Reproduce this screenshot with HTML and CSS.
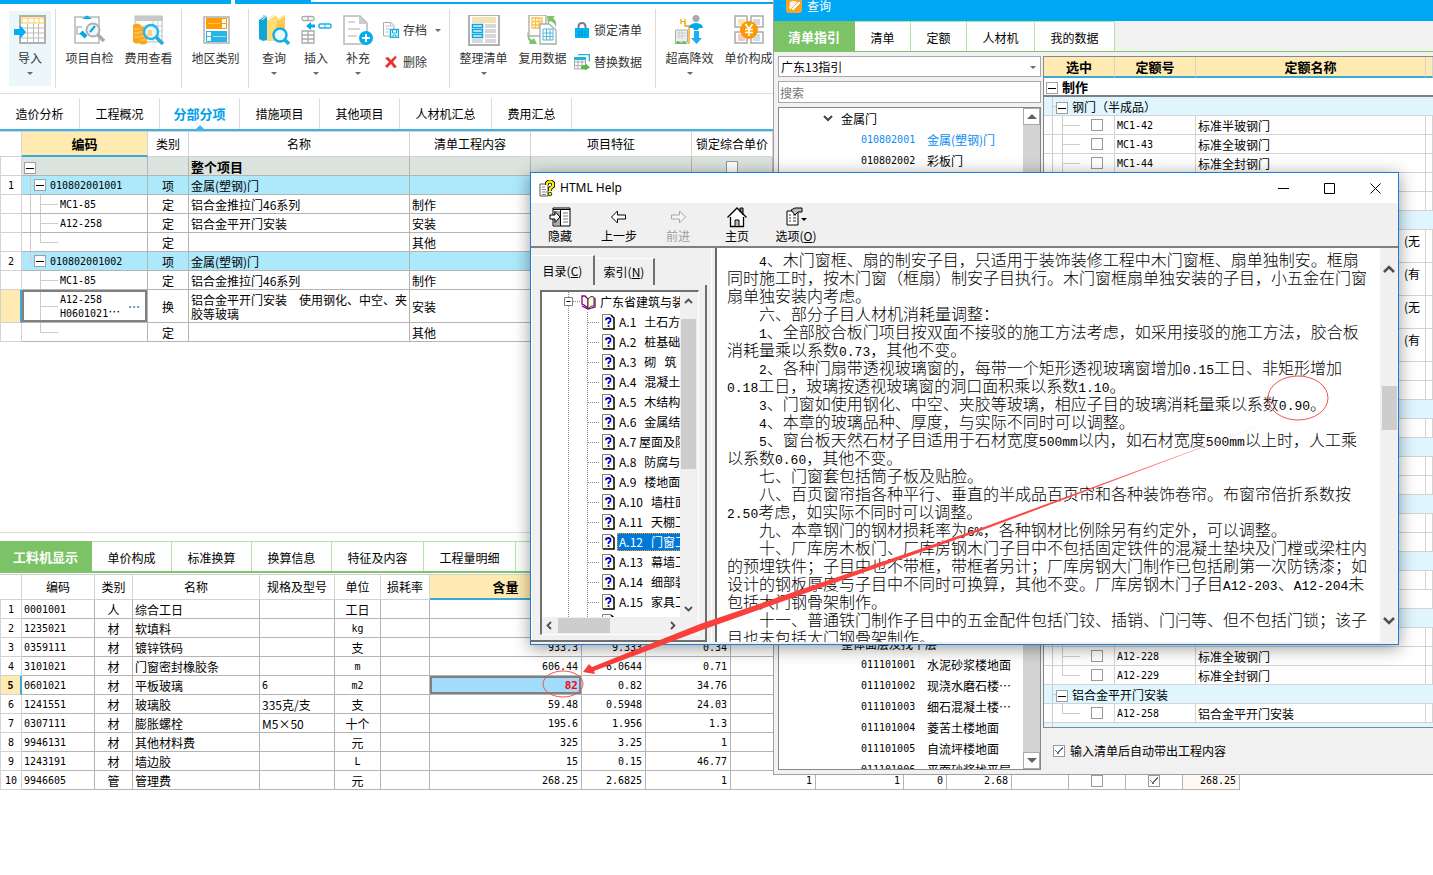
FILE: index.html
```html
<!DOCTYPE html>
<html lang="zh-CN">
<head>
<meta charset="utf-8">
<title>分部分项</title>
<link rel="stylesheet" href="styles.css">
</head>
<body>
<svg class="defs" aria-hidden="true">
  <symbol id="i-topic" viewBox="0 0 13 16"><path d="M1 1H9L12 4V15H1Z" fill="#fffff0"/><path d="M3 3h1M7 3h1M3 13h1M7 13h1M2 6h1M2 10h1" stroke="#e8e000"/><path d="M.5 15V.5H9" fill="none" stroke="#808080"/><path d="M9 1l3 3V15H1" fill="none" stroke="#000" stroke-width="1.5"/><path d="M4.2 6.2V4.8Q6.5 3.2 8.4 4.8V7L6.5 8.6V10M6.5 11.3v1.7" fill="none" stroke="#0000e0" stroke-width="1.8"/></symbol>
  <symbol id="i-caret" viewBox="0 0 6 3"><path d="M0 0H6L3 3Z" fill="#666b78"/></symbol>
</svg>

<main class="app">
  <div class="topline"><span></span><span></span><span></span></div>
  <header class="ribbon">
    <div class="group first">
      <button class="big hot"><svg width="32" height="32" viewBox="0 0 32 32"><rect x="6" y="1" width="25" height="27" fill="#fff" stroke="#b0b0b0" stroke-width="2"/><path d="M7 8h23M8 3h22M8 3v5M14 3v5M20 3v5M25 3v5M30 3v5" stroke="#ffc84a"/><path d="M7 13h23M7 18h23M7 23h23M13.500 9v19M19.500 9v19M24.500 9v19" stroke="#bbb"/><path d="M0 14h6v-4l6 7-6 7v-4H0Z" fill="#00b0f0"/></svg><span>导入</span><svg class="caret"><use href="#i-caret"/></svg></button>
    </div>
    <div class="group">
      <button class="big"><svg width="32" height="32" viewBox="0 0 32 32"><rect x="1" y="2" width="24" height="26" fill="#fff" stroke="#b8b8b8" stroke-width="1.500"/><path d="M8 4l3-2q2-3 4 0l3 2Z" fill="#00aeef"/><path d="M8 12H3v7h5" fill="none" stroke="#bbb" stroke-width="1.500"/><circle cx="19" cy="15" r="6.500" fill="#eef6fa" stroke="#b0b0b0" stroke-width="2"/><path d="M24 20l6 6" stroke="#aaa" stroke-width="3.500"/><path d="M7 17l5 5" stroke="#00a8e8" stroke-width="4"/><path d="M16 17l5-6" stroke="#00a8e8" stroke-width="2"/></svg><span>项目自检</span></button>
      <button class="big"><svg width="32" height="32" viewBox="0 0 32 32"><rect x="2" y="1" width="27" height="26" fill="#fff" stroke="#bbb"/><path d="M2 1h28v5H2Z" fill="#c8c8c8"/><path d="M3 11h27M3 16h27M3 21h27M20 6v21M25 6v21" stroke="#ccc"/><path d="M0 10q4-3 8 0v17q-4 3-8 0ZM6 13q4-3 8 0v15q-4 3-8 0Z" fill="#f9a61a"/><path d="M1 14h6M1 18h6M1 22h6M7 17h6M7 21h6M7 25h6" stroke="#fdd27a"/><circle cx="18" cy="17" r="7" fill="#e8f6fc" stroke="#29b6e8" stroke-width="2.500"/><path d="M15 15h4v6h-5Z" fill="#ffd27a"/><path d="M23 22l7 7" stroke="#29a8dc" stroke-width="3.500"/></svg><span>费用查看</span></button>
    </div>
    <div class="group">
      <button class="big"><svg width="32" height="32" viewBox="0 0 32 32"><rect x="4" y="2" width="25" height="26" fill="#fff" stroke="#b0b0b0" stroke-width="1.500"/><path d="M6 3h21v11H6Z" fill="#ff9c00"/><path d="M22 4h4v4h-4zM22 9h4v4h-4z" fill="#fff"/><path d="M8 8.500h12" stroke="#ffc266"/><path d="M6 16h21v11H6Z" fill="#28b4e4"/><path d="M7 17h4v4H7zM7 22h4v4H7z" fill="#fff"/><path d="M13 21.500h13" stroke="#9be0f5"/></svg><span>地区类别</span></button>
    </div>
    <div class="group">
      <button class="big narrow"><svg width="32" height="32" viewBox="0 0 32 32"><path d="M1 5l5-5 3 1v24l-4 1-4-2Z" fill="#12a5da"/><path d="M2 4l6-4M4 5l6-5" stroke="#fff"/><path d="M9 5l6-5 4 1v25H9Z" fill="#ffdc78"/><path d="M19 4l7-4 1 1v26h-9Z" fill="#ffc94a"/><path d="M10 5l7-5M20 5l6-4" stroke="#fff"/><circle cx="22" cy="20" r="6.500" fill="#eaf8fe" stroke="#16aee8" stroke-width="2.500"/><path d="M26 24l5 5" stroke="#16aee8" stroke-width="3.500"/></svg><span>查询</span><svg class="caret"><use href="#i-caret"/></svg></button>
      <button class="big narrow"><svg width="32" height="32" viewBox="0 0 32 32"><g fill="#fff" stroke="#aaa" stroke-width="1.300"><rect x="2" y="1.500" width="12" height="4" rx="1.500"/><path d="M8 1.500v4M2 16h12v12H2ZM2 20h12M2 24h12M8 16v12"/></g><path d="M6 11l5-4v2.500h4v3h-4V15Z" fill="#00a8e8"/><rect x="19" y="9" width="12" height="4" rx="1.500" fill="#fff" stroke="#18b0ea" stroke-width="1.500"/><path d="M25 9v4" stroke="#18b0ea"/></svg><span>插入</span><svg class="caret"><use href="#i-caret"/></svg></button>
      <button class="big narrow"><svg width="32" height="32" viewBox="0 0 32 32"><path d="M2 1h16l7 7v21H2Z" fill="#fff" stroke="#b8b8b8" stroke-width="1.500"/><path d="M17 1v8h8Z" fill="#ccc"/><path d="M6 7h7M6 14h12M6 21h9" stroke="#ccc" stroke-width="1.500"/><circle cx="24" cy="23" r="7" fill="#00aeef"/><path d="M20 23h8M24 19v8" stroke="#fff" stroke-width="2"/></svg><span>补充</span><svg class="caret"><use href="#i-caret"/></svg></button>
      <div class="stack arch">
        <button class="small"><svg width="16" height="16" viewBox="0 0 16 16"><path d="M.5.500H8l3 3V14H.500Z" fill="#fff" stroke="#aaa"/><path d="M7.500.500V4H11M2.500 4h4M2.500 7h4M2.500 10h3" fill="none" stroke="#bbb"/><rect x="7.500" y="7.500" width="8" height="8" fill="#fff" stroke="#10b0e0" stroke-width="1.500"/><path d="M9.500 8v3h4V8M10 15v-2h3v2" fill="none" stroke="#10b0e0"/></svg><span>存档</span><svg class="caret"><use href="#i-caret"/></svg></button>
        <button class="small"><svg width="16" height="16" viewBox="0 0 16 16"><path d="M2 4l3-1 3 3 4-4 2 1-4 5 4 5-3 1-3-4-4 4-2-2 4-4Z" fill="#e8342c"/></svg><span>删除</span></button>
      </div>
    </div>
    <div class="group">
      <button class="big"><svg width="32" height="32" viewBox="0 0 32 32"><rect x="1" y="0" width="30" height="30" fill="#fff" stroke="#b0b0b0" stroke-width="2"/><path d="M4 2h24v6H4Z" fill="#f5e3b3"/><path d="M17 9h11v4H17zM17 14h11v4H17zM17 19h11v4H17zM17 24h11v4H17zM4 24h11v4H4z" fill="#d8d8dc"/><path d="M4.500 9.500h10v3h-10zM4.500 14.500h10v3h-10zM4.500 19.500h10v3h-10z" fill="#dff4fc" stroke="#10a8dc" stroke-width="1.500"/></svg><span>整理清单</span><svg class="caret"><use href="#i-caret"/></svg></button>
      <button class="big"><svg width="32" height="32" viewBox="0 0 32 32"><path d="M2 0h17v21H2Z" fill="#fff" stroke="#aaa" stroke-width="1.300"/><path d="M5 3h10v10H5ZM5 6.500h10M5 10h10M8.500 3v10M12 3v10" fill="none" stroke="#ffc040" stroke-width="1.300"/><path d="M13 9h9l7 6v14H13Z" fill="#fff" stroke="#aaa" stroke-width="1.300"/><path d="M16 14h10v11H16ZM16 18h10M16 21.500h10M19.500 14v11M23 14v11" fill="none" stroke="#4db8d8"/><path d="M20 1h8l-2 2q4 3 3 9-2-5-6-6l-2 3ZM1 16q0 7 4 9l2-2 3 6H2l1-2q-4-4-2-11Z" fill="#7cc36b"/></svg><span>复用数据</span></button>
      <div class="stack lock">
        <button class="small"><svg width="16" height="16" viewBox="0 0 16 16"><path d="M4.500 7V4Q5 1 8 1t3.500 3v3" fill="none" stroke="#777c88" stroke-width="2"/><path d="M1 6h14v10H1Z" fill="#00b4f4"/><path d="M4 10h2M7 10h2M10 10h2M4 13h2M7 13h2M10 13h2" stroke="#067ab0"/></svg><span>锁定清单</span></button>
        <button class="small"><svg width="16" height="16" viewBox="0 0 16 16"><path d="M.5 4h11v11H.500ZM.500 8h11M.500 11.500h11M4 4v11M8 4v11" fill="#fff" stroke="#aaa"/><path d="M0 3h12v3H0Z" fill="#20b4d8"/><path d="M4 .5h11.500v7" fill="none" stroke="#20b4d8" stroke-width="1.500"/><path d="M7 12h4V9l5 4.500-5 3V15H7Z" fill="#4dbb45"/></svg><span>替换数据</span></button>
      </div>
    </div>
    <div class="group last">
      <button class="big"><svg width="32" height="32" viewBox="0 0 32 32"><path d="M7 4v5M11 4v5M7 6.500h4" stroke="#f9a000" stroke-width="1.200"/><path d="M11 8v3h6M15 11v18" fill="none" stroke="#f9a000" stroke-width="1.300"/><circle cx="22" cy="3.500" r="3.500" fill="#aaa"/><path d="M16 10q6-4 12 0l1 3h-4l-1 2h-4l-1-2h-4Z" fill="#00a8ec"/><path d="M20 16h5v7h3l-5.500 6-5.500-6h3Z" fill="#1bb0f0"/><path d="M1.500 15h12v12h-12Z" fill="#eee" stroke="#aaa"/><path d="M3 18h9M3 21h9M5 16v8M8 16v8" stroke="#ccc"/><path d="M0 29l4-3 3 2 3-2 4 3Z" fill="#6cbd60"/></svg><span>超高降效</span><svg class="caret"><use href="#i-caret"/></svg></button>
      <button class="big"><svg width="32" height="32" viewBox="0 0 32 32"><g fill="#fff" stroke="#aaa" stroke-width="1.500"><path d="M2 1h12v11H2ZM18 1h12v11H18ZM2 17h12v11H2ZM18 17h12v11H18Z"/></g><path d="M5 4h7v6H5Z" fill="#f5e3b3"/><path d="M20 4h7v6h-7Z" fill="#d8d8dc"/><path d="M5 19h7v7H5Z" fill="#f1c8cd"/><path d="M20 19h7v7h-7Z" fill="#c8e0f0"/><circle cx="16" cy="15" r="9" fill="#ff9800"/><path d="M12.500 9l3.500 5 3.500-5M16 14v7M12 14.500h8M12 17.500h8" fill="none" stroke="#fff" stroke-width="1.700"/></svg><span>单价构成</span></button>
    </div>
  </header>

  <nav class="maintabs">
    <button>造价分析</button><button>工程概况</button><button class="on">分部分项</button><button>措施项目</button><button>其他项目</button><button class="w5">人材机汇总</button><button>费用汇总</button>
  </nav>

  <section class="upper">
    <table class="grid bill">
      <colgroup><col class="c22"><col class="c126"><col class="c41"><col class="c221"><col class="c121"><col class="c161"><col class="c81"></colgroup>
      <thead><tr><th></th><th class="sel">编码</th><th>类别</th><th>名称</th><th>清单工程内容</th><th>项目特征</th><th>锁定综合单价</th></tr></thead>
      <tbody>
        <tr class="total"><td class="no"></td><td class="node0"><button class="exp" aria-label="折叠"></button></td><td></td><td class="strong">整个项目</td><td></td><td></td><td class="mid"><input type="checkbox" aria-label="锁定综合单价"></td></tr>
        <tr class="item"><td class="no">1</td><td class="code node1"><button class="exp" aria-label="折叠"></button>010802001001</td><td class="mid">项</td><td>金属(塑钢)门</td><td></td><td></td><td></td></tr>
        <tr><td class="no"></td><td class="code leaf v1">MC1-85</td><td class="mid">定</td><td>铝合金推拉门46系列</td><td>制作</td><td></td><td></td></tr>
        <tr><td class="no"></td><td class="code leaf v1">A12-258</td><td class="mid">定</td><td>铝合金平开门安装</td><td>安装</td><td></td><td></td></tr>
        <tr><td class="no"></td><td class="code leaf v1 end"></td><td class="mid">定</td><td></td><td>其他</td><td></td><td></td></tr>
        <tr class="item"><td class="no">2</td><td class="code node1 end"><button class="exp" aria-label="折叠"></button>010802001002</td><td class="mid">项</td><td>金属(塑钢)门</td><td></td><td></td><td></td></tr>
        <tr><td class="no"></td><td class="code leaf">MC1-85</td><td class="mid">定</td><td>铝合金推拉门46系列</td><td>制作</td><td></td><td></td></tr>
        <tr class="tall"><td class="no cur"></td><td class="code leaf focus"><div class="edit"><span>A12-258<br>H0601021<i>⋯</i></span><button aria-label="更多">⋯</button></div></td><td class="mid">换</td><td class="wrap">铝合金平开门安装　使用钢化、中空、夹胶等玻璃</td><td>安装</td><td></td><td></td></tr>
        <tr><td class="no"></td><td class="code leaf end"></td><td class="mid">定</td><td></td><td>其他</td><td></td><td></td></tr>
      </tbody>
    </table>
  </section>

  <section class="lower">
    <nav class="greentabs">
      <button class="on w92">工料机显示</button><button class="w80">单价构成</button><button class="w80">标准换算</button><button class="w80">换算信息</button><button class="w92">特征及内容</button><button class="w92">工程量明细</button>
    </nav>
    <table class="grid res">
      <colgroup><col class="c22"><col class="c73"><col class="c38"><col class="c127"><col class="c75"><col class="c46"><col class="c49"><col class="c152"><col class="c64"><col class="c85"><col class="c85"><col class="c88"><col class="c43"><col class="c65"><col class="c57"><col class="c57"><col class="c57"></colgroup>
      <thead><tr><th></th><th>编码</th><th>类别</th><th>名称</th><th>规格及型号</th><th>单位</th><th>损耗率</th><th class="sel">含量</th><th></th><th></th><th></th><th></th><th></th><th></th><th></th><th></th><th></th></tr></thead>
      <tbody>
        <tr><td class="no">1</td><td class="code">0001001</td><td class="mid">人</td><td>综合工日</td><td></td><td class="mid">工日</td><td></td><td></td><td></td><td></td><td></td><td></td><td></td><td></td><td></td><td></td><td></td></tr>
        <tr><td class="no">2</td><td class="code">1235021</td><td class="mid">材</td><td>软填料</td><td></td><td class="mid code">kg</td><td></td><td></td><td></td><td></td><td></td><td></td><td></td><td></td><td></td><td></td><td></td></tr>
        <tr><td class="no">3</td><td class="code">0359111</td><td class="mid">材</td><td>镀锌铁码</td><td></td><td class="mid">支</td><td></td><td class="num">933.3</td><td class="num">9.333</td><td class="num">0.34</td><td></td><td></td><td></td><td></td><td></td><td></td><td></td></tr>
        <tr><td class="no">4</td><td class="code">3101021</td><td class="mid">材</td><td>门窗密封橡胶条</td><td></td><td class="mid code">m</td><td></td><td class="num">606.44</td><td class="num">6.0644</td><td class="num">0.71</td><td></td><td></td><td></td><td></td><td></td><td></td><td></td></tr>
        <tr><td class="no cur">5</td><td class="code">0601021</td><td class="mid">材</td><td>平板玻璃</td><td class="code">6</td><td class="mid code">m2</td><td></td><td class="num hit">82</td><td class="num">0.82</td><td class="num">34.76</td><td></td><td></td><td></td><td></td><td></td><td></td><td></td></tr>
        <tr><td class="no">6</td><td class="code">1241551</td><td class="mid">材</td><td>玻璃胶</td><td>335克/支</td><td class="mid">支</td><td></td><td class="num">59.48</td><td class="num">0.5948</td><td class="num">24.03</td><td></td><td></td><td></td><td></td><td></td><td></td><td></td></tr>
        <tr><td class="no">7</td><td class="code">0307111</td><td class="mid">材</td><td>膨胀螺栓</td><td>M5×50</td><td class="mid">十个</td><td></td><td class="num">195.6</td><td class="num">1.956</td><td class="num">1.3</td><td></td><td></td><td></td><td></td><td></td><td></td><td></td></tr>
        <tr><td class="no">8</td><td class="code">9946131</td><td class="mid">材</td><td>其他材料费</td><td></td><td class="mid">元</td><td></td><td class="num">325</td><td class="num">3.25</td><td class="num">1</td><td></td><td></td><td></td><td></td><td></td><td></td><td></td></tr>
        <tr><td class="no">9</td><td class="code">1243191</td><td class="mid">材</td><td>墙边胶</td><td></td><td class="mid code">L</td><td></td><td class="num">15</td><td class="num">0.15</td><td class="num">46.77</td><td></td><td></td><td></td><td></td><td></td><td></td><td></td></tr>
        <tr><td class="no">10</td><td class="code">9946605</td><td class="mid">管</td><td>管理费</td><td></td><td class="mid">元</td><td></td><td class="num">268.25</td><td class="num">2.6825</td><td class="num">1</td><td class="num">1</td><td class="num">1</td><td class="num">0</td><td class="num">2.68</td><td></td><td class="mid"><input type="checkbox" aria-label="暂估"></td><td class="mid"><input type="checkbox" checked aria-label="计入"></td><td class="num sum">268.25</td></tr>
      </tbody>
    </table>
  </section>
</main>

<section class="query">
  <div class="qtitle"><svg width="16" height="16" viewBox="0 0 16 16"><rect width="16" height="16" y="-3" rx="3" fill="#f7a428"/><path d="M4 2q4-2 7 0l-3 7q-3 2-5-1Z" fill="#fff3df"/><path d="M6 8l7-7 2 2-7 7-3 1Z" fill="#fff" stroke="#e88a00" stroke-width=".6"/></svg><span>查询</span></div>
  <nav class="greentabs">
    <button class="on q81">清单指引</button><button class="q56">清单</button><button class="q56">定额</button><button class="q68">人材机</button><button class="q80">我的数据</button>
  </nav>
  <div class="qbody">
    <div class="qleft">
      <div class="combo"><select aria-label="指引库"><option>广东13指引</option></select><svg class="caret"><use href="#i-caret"/></svg></div>
      <input class="search" type="text" placeholder="搜索" aria-label="搜索">
      <div class="qtree">
        <ul>
          <li class="chap"><svg width="10" height="7" viewBox="0 0 10 7"><path d="M1 1l4 4 4-4" fill="none" stroke="#444" stroke-width="2"/></svg>金属门</li>
          <li class="picked"><b>010802001</b>金属(塑钢)门</li>
          <li><b>010802002</b>彩板门</li>
          <li class="gap"></li>
          <li class="chap">整体面层及找平层</li>
          <li><b>011101001</b>水泥砂浆楼地面</li>
          <li><b>011101002</b>现浇水磨石楼⋯</li>
          <li><b>011101003</b>细石混凝土楼⋯</li>
          <li><b>011101004</b>菱苦土楼地面</li>
          <li><b>011101005</b>自流坪楼地面</li>
          <li><b>011101006</b>平面砂浆找平层</li>
        </ul>
        <div class="qscroll"><button aria-label="向上"><svg width="10" height="5" viewBox="0 0 10 5"><path d="M0 5H10L5 0Z" fill="#5d6270"/></svg></button><button aria-label="向下"><svg width="10" height="5" viewBox="0 0 10 5"><path d="M0 0H10L5 5Z" fill="#5d6270"/></svg></button></div>
      </div>
    </div>
    <div class="qright">
      <div class="qgrid">
        <table class="grid quota">
          <colgroup><col class="c71"><col class="c81"><col><col class="c7"></colgroup>
          <thead><tr><th class="sel">选中</th><th class="sel">定额号</th><th class="sel">定额名称</th><th class="sel"></th></tr></thead>
          <tbody>
            <tr class="root"><td colspan="4" class="node0 strong"><button class="exp" aria-label="折叠"></button>制作</td></tr>
            <tr class="grp"><td colspan="4" class="node1"><button class="exp" aria-label="折叠"></button>钢门（半成品）</td></tr>
            <tr><td class="leaf v1 pick"><input type="checkbox" aria-label="MC1-42"></td><td class="code">MC1-42</td><td>标准半玻钢门</td><td></td></tr>
            <tr><td class="leaf v1 pick"><input type="checkbox" aria-label="MC1-43"></td><td class="code">MC1-43</td><td>标准全玻钢门</td><td></td></tr>
            <tr><td class="leaf v1 pick"><input type="checkbox" aria-label="MC1-44"></td><td class="code">MC1-44</td><td>标准全封钢门</td><td></td></tr>
            <tr><td></td><td></td><td></td><td></td></tr>
            <tr><td></td><td></td><td></td><td></td></tr>
            <tr class="grp"><td colspan="4"></td></tr>
            <tr class="tall"><td></td><td></td><td class="tail">(无</td><td></td></tr>
            <tr class="tall"><td></td><td></td><td class="tail">(有</td><td></td></tr>
            <tr class="tall"><td></td><td></td><td class="tail">(无</td><td></td></tr>
            <tr class="tall"><td></td><td></td><td class="tail">(有</td><td></td></tr>
            <tr><td></td><td></td><td></td><td></td></tr>
            <tr><td></td><td></td><td></td><td></td></tr>
            <tr class="grp"><td colspan="4"></td></tr>
            <tr><td></td><td></td><td></td><td></td></tr>
            <tr class="grp"><td colspan="4"></td></tr>
            <tr><td></td><td></td><td></td><td></td></tr>
            <tr><td></td><td></td><td></td><td></td></tr>
            <tr class="grp"><td colspan="4"></td></tr>
            <tr><td></td><td></td><td></td><td></td></tr>
            <tr><td></td><td></td><td></td><td></td></tr>
            <tr class="grp"><td colspan="4"></td></tr>
            <tr><td></td><td></td><td></td><td></td></tr>
            <tr><td colspan="4"></td></tr>
            <tr class="grp"><td colspan="4"></td></tr>
            <tr><td class="leaf v1"></td><td></td><td></td><td></td></tr>
            <tr><td class="leaf v1 pick"><input type="checkbox" aria-label="A12-228"></td><td class="code">A12-228</td><td>标准全玻钢门</td><td></td></tr>
            <tr><td class="leaf v1 pick end"><input type="checkbox" aria-label="A12-229"></td><td class="code">A12-229</td><td>标准全封钢门</td><td></td></tr>
            <tr class="grp"><td colspan="4" class="node1"><button class="exp" aria-label="折叠"></button>铝合金平开门安装</td></tr>
            <tr><td class="leaf v1 pick end"><input type="checkbox" aria-label="A12-258"></td><td class="code">A12-258</td><td>铝合金平开门安装</td><td></td></tr>
            <tr class="grp"><td colspan="4" class="node1"><button class="exp" aria-label="折叠"></button></td></tr>
          </tbody>
        </table>
      </div>
      <label class="auto"><input type="checkbox" checked><span>输入清单后自动带出工程内容</span></label>
    </div>
  </div>
</section>

<section class="help">
  <div class="htitle">
    <svg width="17" height="17" viewBox="0 0 17 17"><path d="M1 4h8v12H1Z" fill="#fff" stroke="#555"/><path d="M3 7h3M3 9.500h4M3 12h5M3 14.500h4" stroke="#888"/><path d="M8 5V3q3-3 6 0v3l-3 2.500V11" fill="none" stroke="#000" stroke-width="4"/><path d="M8 5V3q3-3 6 0v3l-3 2.500V11" fill="none" stroke="#ffee00" stroke-width="2.400"/><circle cx="11" cy="14" r="1.800" fill="#ffee00" stroke="#000" stroke-width=".8"/></svg>
    <h1>HTML Help</h1>
    <button aria-label="最小化"><svg width="11" height="11" viewBox="0 0 11 11"><path d="M0 5.500h11" stroke="#000"/></svg></button>
    <button aria-label="最大化"><svg width="11" height="11" viewBox="0 0 11 11"><path d="M.5.500h10v10H.500Z" fill="none" stroke="#000"/></svg></button>
    <button aria-label="关闭"><svg width="11" height="11" viewBox="0 0 11 11"><path d="M.5.500l10 10M10.500.500l-10 10" stroke="#000"/></svg></button>
  </div>
  <div class="htools">
    <button><svg width="22" height="22" viewBox="0 0 22 22"><path d="M4 2h17v18H4Z" fill="#fff" stroke="#000"/><path d="M4 3.500h17M11.500 4v16" stroke="#000"/><path d="M5 5h6v14H5Z" fill="#aaa"/><path d="M14 7h5M14 10h5M14 13h5M14 16h5" stroke="#777"/><path d="M1 9h5V5.500l5 5.500-5 5.500V13H1Z" fill="#fff" stroke="#000"/></svg><span>隐藏</span></button>
    <button><svg width="22" height="22" viewBox="0 0 22 22"><path d="M3.500 11l6-6v4h8v4h-8v4Z" fill="#fff" stroke="#000"/></svg><span>上一步</span></button>
    <button disabled><svg width="22" height="22" viewBox="0 0 22 22"><path d="M18.500 11l-6-6v4h-8v4h8v4Z" fill="#f6f6f6" stroke="#a8a8a8"/></svg><span>前进</span></button>
    <button><svg width="22" height="22" viewBox="0 0 22 22"><path d="M14 6V2h3v7" fill="#888" stroke="#000"/><path d="M4 11v9.500h14V11L11 4Z" fill="#fff"/><path d="M4.500 11v9.500h13V11M1.500 11.500L11 2l9.500 9.500" fill="none" stroke="#000" stroke-width="1.300"/><path d="M9 20v-6h4v6" fill="#bbb" stroke="#000"/></svg><span>主页</span></button>
    <button><svg width="22" height="22" viewBox="0 0 22 22"><path d="M2 5h11v14H2Z" fill="#fff" stroke="#000"/><path d="M4 9h2M8 9h3M4 12h2M8 12h3M4 15h2M8 15h3" stroke="#333"/><path d="M6 4l4-2h7v4h-4l-3 3Z" fill="#bbb" stroke="#000"/><path d="M16 12h6l-3 3Z"/></svg><span>选项(<u>O</u>)</span></button>
  </div>
  <div class="hpanes">
    <div class="hleft">
      <div class="htabs"><button class="on">目录(<u>C</u>)</button><button>索引(<u>N</u>)</button></div>
      <div class="hpanel">
        <div class="hbox">
          <div class="hview">
            <ul class="htree">
              <li class="book"><svg width="34" height="20" viewBox="0 0 34 20"><path d="M9 9.500h8" stroke="#888" stroke-dasharray="1 1"/><path d="M.5 5.500h8v8h-8Z" fill="#fff" stroke="#808080"/><path d="M2.500 9.500h4" stroke="#000"/><path d="M18 4l3 0 3 3v9l-4-3-2-1Z" fill="#fff" stroke="#800080" stroke-width="1.300"/><path d="M24 7q3-4 6-2v9q-3-1-6 3Z" fill="#fffbd0" stroke="#333"/><path d="M18 14l6 3 7-2V6" fill="none" stroke="#800080" stroke-width="1.300"/></svg><span>广东省建筑与装饰</span></li>
              <li><svg width="13" height="16"><use href="#i-topic"/></svg><span>A.1&nbsp;&nbsp; 土石方</span></li>
              <li><svg width="13" height="16"><use href="#i-topic"/></svg><span>A.2&nbsp;&nbsp; 桩基础</span></li>
              <li><svg width="13" height="16"><use href="#i-topic"/></svg><span>A.3&nbsp;&nbsp; 砌&nbsp;&nbsp; 筑</span></li>
              <li><svg width="13" height="16"><use href="#i-topic"/></svg><span>A.4&nbsp;&nbsp; 混凝土</span></li>
              <li><svg width="13" height="16"><use href="#i-topic"/></svg><span>A.5&nbsp;&nbsp; 木结构</span></li>
              <li><svg width="13" height="16"><use href="#i-topic"/></svg><span>A.6&nbsp;&nbsp; 金属结</span></li>
              <li><svg width="13" height="16"><use href="#i-topic"/></svg><span>A.7 屋面及防</span></li>
              <li><svg width="13" height="16"><use href="#i-topic"/></svg><span>A.8&nbsp;&nbsp; 防腐与</span></li>
              <li><svg width="13" height="16"><use href="#i-topic"/></svg><span>A.9&nbsp;&nbsp; 楼地面</span></li>
              <li><svg width="13" height="16"><use href="#i-topic"/></svg><span>A.10&nbsp;&nbsp; 墙柱面</span></li>
              <li><svg width="13" height="16"><use href="#i-topic"/></svg><span>A.11&nbsp;&nbsp; 天棚工</span></li>
              <li class="on"><svg width="13" height="16"><use href="#i-topic"/></svg><span>A.12&nbsp;&nbsp; 门窗工程</span></li>
              <li><svg width="13" height="16"><use href="#i-topic"/></svg><span>A.13&nbsp;&nbsp; 幕墙工</span></li>
              <li><svg width="13" height="16"><use href="#i-topic"/></svg><span>A.14&nbsp;&nbsp; 细部装</span></li>
              <li><svg width="13" height="16"><use href="#i-topic"/></svg><span>A.15&nbsp;&nbsp; 家具工</span></li>
              <li><svg width="13" height="16"><use href="#i-topic"/></svg></li>
            </ul>
            <div class="vbar"><svg width="9" height="6" viewBox="0 0 9 6"><path d="M1 5l3.500-3.500L8 5" fill="none" stroke="#505050" stroke-width="1.800"/></svg><i></i><svg width="9" height="6" viewBox="0 0 9 6"><path d="M1 1l3.500 3.500L8 1" fill="none" stroke="#505050" stroke-width="1.800"/></svg></div>
          </div>
          <div class="hbar"><svg width="6" height="9" viewBox="0 0 6 9"><path d="M5 1L1.500 4.500 5 8" fill="none" stroke="#505050" stroke-width="1.800"/></svg><i></i><svg width="6" height="9" viewBox="0 0 6 9"><path d="M1 1l3.500 3.500L1 8" fill="none" stroke="#505050" stroke-width="1.800"/></svg></div>
        </div>
      </div>
    </div>
    <div class="split"></div>
    <div class="hright">
      <article>
        <p><span class="n">4</span>、木门窗框、扇的制安子目，只适用于装饰装修工程中木门窗框、扇单独制安。框扇<br>同时施工时，按木门窗（框扇）制安子目执行。木门窗框扇单独安装的子目，小五金在门窗<br>扇单独安装内考虑。</p>
        <p>六、部分子目人材机消耗量调整：</p>
        <p><span class="n">1</span>、全部胶合板门项目按双面不接驳的施工方法考虑，如采用接驳的施工方法，胶合板<br>消耗量乘以系数<span class="n">0.73</span>，其他不变。</p>
        <p><span class="n">2</span>、各种门扇带透视玻璃窗的，每带一个矩形透视玻璃窗增加<span class="n">0.15</span>工日、非矩形增加<br><span class="n">0.18</span>工日，玻璃按透视玻璃窗的洞口面积乘以系数<span class="n">1.10</span>。</p>
        <p><span class="n">3</span>、门窗如使用钢化、中空、夹胶等玻璃，相应子目的玻璃消耗量乘以系数<span class="n">0.90</span>。</p>
        <p><span class="n">4</span>、本章的玻璃品种、厚度，与实际不同时可以调整。</p>
        <p><span class="n">5</span>、窗台板天然石材子目适用于石材宽度<span class="n">500mm</span>以内，如石材宽度<span class="n">500mm</span>以上时，人工乘<br>以系数<span class="n">0.60</span>，其他不变。</p>
        <p>七、门窗套包括筒子板及贴脸。</p>
        <p>八、百页窗帘指各种平行、垂直的半成品百页帘和各种装饰卷帘。布窗帘倍折系数按<br><span class="n">2.50</span>考虑，如实际不同时可以调整。</p>
        <p>九、本章钢门的钢材损耗率为<span class="n">6%</span>，各种钢材比例除另有约定外，可以调整。</p>
        <p>十、厂库房木板门、厂库房钢木门子目中不包括固定铁件的混凝土垫块及门樘或梁柱内<br>的预埋铁件；子目中也不带框，带框者另计；厂库房钢大门制作已包括刷第一次防锈漆；如<br>设计的钢板厚度与子目中不同时可换算，其他不变。厂库房钢木门子目<span class="n">A12-203</span>、<span class="n">A12-204</span>未<br>包括大门钢骨架制作。</p>
        <p>十一、普通铁门制作子目中的五金配件包括门铰、插销、门闩等、但不包括门锁；该子<br>目也未包括大门钢骨架制作。</p>
      </article>
      <div class="abar"><svg width="12" height="8" viewBox="0 0 12 8"><path d="M1 7l5-5 5 5" fill="none" stroke="#505050" stroke-width="2.500"/></svg><i></i><svg width="12" height="8" viewBox="0 0 12 8"><path d="M1 1l5 5 5-5" fill="none" stroke="#505050" stroke-width="2.500"/></svg></div>
    </div>
  </div>
</section>

<svg class="marks" width="1433" height="875" viewBox="0 0 1433 875" aria-hidden="true">
  <defs><linearGradient id="fade" gradientUnits="userSpaceOnUse" x1="583" y1="672" x2="1278" y2="419"><stop offset="0" stop-color="#f83c38"/><stop offset=".7" stop-color="#fa4a46"/><stop offset="1" stop-color="#fcc8c8"/></linearGradient></defs>
  <ellipse cx="1298" cy="398" rx="30" ry="22" fill="none" stroke="#f05050"/>
  <ellipse cx="563" cy="684" rx="20" ry="13" fill="none" stroke="#f05050"/>
  <path d="M583 672L589 664 592 667 700 624 980 528.500 1278 419 980 531 702 630 594 671 595 674Z" fill="url(#fade)"/>
</svg>
</body>
</html>
```
FILE: styles.css
```css
* { box-sizing: border-box; }
html, body { height: 100%; }
body {
  margin: 0;
  position: relative;
  overflow: hidden;
  background: #fff;
  color: #000;
  font: 12px/18px "Noto Sans CJK SC", sans-serif;
  text-spacing-trim: space-all;
}
button { border: 0; padding: 0; margin: 0; background: none; font: inherit; color: inherit; white-space: nowrap; }
ul { list-style: none; margin: 0; padding: 0; }
svg { display: block; flex: none; }
.defs { position: absolute; width: 0; height: 0; }
.caret { width: 6px; height: 3px; }

/* main window */
.app { height: 100%; display: flex; flex-direction: column; }
.topline { display: flex; flex: none; height: 4px; }
.topline span:nth-child(1) { width: 231px; background: #00a8f3; }
.topline span:nth-child(2) { width: 76px; margin-left: 4px; background: #00a8f3; }
.topline span:nth-child(3) { flex: 1; border-bottom: 2px solid #00a8f3; }

.ribbon { display: flex; flex: none; height: 90px; padding: 5px 0; border-bottom: 1px solid #dcdcdc; color: #333; overflow: hidden; }
.group { display: flex; flex: none; padding: 0 3px 0 4px; border-right: 1px solid #dcdcdc; }
.group.first { padding: 0 4px 0 9px; }
.group.last { border-right: 0; }
.big { display: flex; flex-direction: column; align-items: center; width: 59px; height: 75px; margin-top: 2px; padding-top: 4px; line-height: 16px; }
.big span { margin-top: 3px; }
.big .caret { margin-top: 6px; }
.big.narrow, .big.hot { width: 42px; }
.big.hot { background: #ecf7fb; }
.stack { display: flex; flex-direction: column; gap: 14px; padding-top: 12px; }
.stack.arch { width: 67px; padding-left: 4px; }
.stack.lock { width: 80px; padding-left: 2px; }
.small { display: flex; align-items: center; gap: 4px; height: 18px; }
.small .caret { margin-left: 4px; }

.maintabs { display: flex; flex: none; height: 37px; padding-top: 4px; border-bottom: 2px solid #3fb2e6; }
.maintabs button { width: 80px; border-right: 1px solid #dcdcdc; position: relative; }
.maintabs .w5 { width: 92px; }
.maintabs .on { color: #00a0ea; font-size: 13px; font-weight: bold; }
.maintabs .on::after { content: ""; position: absolute; left: 50%; bottom: 0; margin-left: -4px; border: 4px solid transparent; border-top: 0; border-bottom-color: #3fb2e6; }

.upper { flex: 1; min-height: 0; overflow: hidden; border-bottom: 1px solid #dcdcdc; }
.lower { flex: none; padding: 8px 0 85px; }

/* grids */
.grid { table-layout: fixed; border-collapse: separate; border-spacing: 0; }
.bill { width: 773px; border-top: 1px solid #d3d3d3; }
.res { width: 1240px; margin-top: 1px; border-top: 1px solid #d3d3d3; }
.quota { width: 100%; }
.grid th { height: 25px; padding: 0; font-weight: normal; border-right: 1px solid #d3d3d3; border-bottom: 1px solid #d3d3d3; white-space: nowrap; overflow: hidden; }
.grid th.sel { background: #ffebb2; border-bottom: 2px solid #3aa9d6; font-weight: bold; font-size: 13px; }
.grid td { height: 19px; padding: 2px 2px 0; line-height: 16px; border-right: 1px solid #b4b4b4; border-bottom: 1px solid #b4b4b4; white-space: nowrap; overflow: hidden; }
.grid td.no { padding: 2px 0 0; text-align: center; border-left: 1px solid #d3d3d3; border-color: #d3d3d3; background: #fff; font: 10px/16px "DejaVu Sans Mono", monospace; }
.grid td.cur { background: #ffebb2; border-right: 2px solid #3aa9d6; font-weight: bold; }
.grid .mid { text-align: center; }
.grid td.code, .grid td.num { font: 10px/16px "DejaVu Sans Mono", monospace; }
.grid td.num { text-align: right; padding-right: 3px; }
.grid .strong { font-weight: bold; font-size: 13px; }
.grid .tall td { height: 33px; }
.grid td.wrap { white-space: normal; line-height: 14px; }
.total td { background-color: #dbe3de; }
.item td { background-color: #ade8fb; }
.grid td.hit { background: #a1dcfc; box-shadow: inset 0 0 0 2px #808080; color: #f00; font-weight: bold; font-size: 11px; }
.grid td.sum { background: #fff9f3; }

.c22 { width: 22px; } .c126 { width: 126px; } .c41 { width: 41px; } .c221 { width: 221px; }
.c121 { width: 121px; } .c161 { width: 161px; } .c81 { width: 81px; } .c73 { width: 73px; }
.c38 { width: 38px; } .c127 { width: 127px; } .c75 { width: 75px; } .c46 { width: 46px; }
.c49 { width: 49px; } .c152 { width: 152px; } .c64 { width: 64px; } .c85 { width: 85px; }
.c88 { width: 88px; } .c43 { width: 43px; } .c65 { width: 65px; } .c57 { width: 57px; }
.c71 { width: 71px; } .c7 { width: 7px; }

/* tree connectors */
.exp { width: 12px; height: 12px; margin-right: 4px; vertical-align: -1px; border: 1px solid #a0a0a0; background: linear-gradient(#000, #000) center / 8px 1px no-repeat #fff; }
.grid td.node1 { padding-left: 12px; background-image: linear-gradient(#ccc, #ccc), linear-gradient(#ccc, #ccc); background-position: 8px 0, 8px 9px; background-size: 1px 100%, 4px 1px; background-repeat: no-repeat; }
.grid td.node1.end { background-size: 1px 9px, 4px 1px; }
.grid td.leaf { padding-left: 38px; background-image: linear-gradient(#ccc, #ccc), linear-gradient(#ccc, #ccc), linear-gradient(#ccc, #ccc); background-position: 18px 0, 18px 50%, 8px 0; background-size: 1px 100%, 18px 1px, 0 0; background-repeat: no-repeat; }
.grid td.leaf.v1 { background-size: 1px 100%, 18px 1px, 1px 100%; }
.grid td.leaf.end { background-size: 1px 50%, 18px 1px, 0 0; }
.grid td.leaf.v1.end { background-size: 1px 50%, 18px 1px, 1px 100%; }
.grid td.leaf.pick { padding: 0 0 0 47px; }
.grid td.focus { box-shadow: inset 0 0 0 2px #808080; line-height: 14px; }
.edit { display: flex; align-items: center; justify-content: space-between; padding-right: 5px; }
.edit i { font: 12px/1px "Noto Sans CJK SC", sans-serif; }
.edit button { color: #3a8fd0; font: bold 12px/14px "Noto Sans CJK SC", sans-serif; }

input[type="checkbox"] { appearance: none; display: block; width: 12px; height: 12px; margin: 0; border: 1px solid #999; background: #fff; }
td.mid input[type="checkbox"] { margin: 0 auto; }
input[type="checkbox"]:checked { background: linear-gradient(-45deg, transparent 42%, #667 42% 58%, transparent 58%) 3px 1px / 6px 7px no-repeat, linear-gradient(45deg, transparent 38%, #667 38% 62%, transparent 62%) 1px 4px / 4px 4px no-repeat #fff; }

/* green tabs */
.greentabs { display: flex; height: 32px; border-bottom: 2px solid #7fc56c; }
.greentabs button { border: solid #b4e3a4; border-width: 1px 1px 0 0; background: #fff; padding-top: 3px; }
.greentabs .on { background: #7cc367; border-color: #7cc367; color: #fff; font-size: 13px; font-weight: bold; padding-top: 0; }
.w92 { width: 92px; } .w80 { width: 80px; }
.q81 { width: 81px; } .q56 { width: 56px; } .q68 { width: 68px; } .q80 { width: 80px; }
.lower .greentabs { background: linear-gradient(#b4e3a4, #b4e3a4) 0 0 / 100% 1px no-repeat; }

/* query window */
.query { position: absolute; left: 773px; top: 0; right: 0; height: 775px; display: flex; flex-direction: column; background: #f1f1f1; border-left: 1px solid #a0a0a0; border-bottom: 1px solid #a0a0a0; }
.qtitle { display: flex; flex: none; gap: 5px; height: 21px; padding-left: 12px; background: #00a8f3; color: #fff; line-height: 12px; }
.query .greentabs { flex: none; height: 31px; border-bottom-width: 1px; }
.qbody { flex: 1; min-height: 0; display: flex; gap: 2px; padding: 4px 0 4px 4px; }
.qleft { width: 263px; display: flex; flex-direction: column; gap: 4px; }
.combo { position: relative; height: 21px; flex: none; }
.combo select { appearance: none; width: 100%; height: 21px; border: 1px solid #a8a8a8; border-radius: 0; background: #fff; font: inherit; padding: 0 2px; }
.combo .caret { position: absolute; right: 5px; top: 10px; }
.search { flex: none; height: 22px; width: 100%; border: 1px solid #a8a8a8; background: #fff; font: inherit; padding: 0 1px; }
.search::placeholder { color: #777; opacity: 1; }
.qtree { flex: 1; min-height: 0; display: flex; border: 1px solid #828790; background: #fff; overflow: hidden; }
.qtree ul { flex: 1; min-width: 0; }
.qtree li { display: flex; height: 21px; line-height: 21px; padding-left: 82px; white-space: nowrap; }
.qtree li b { width: 66px; font: 10px/21px "DejaVu Sans Mono", monospace; }
.qtree .chap { padding-left: 62px; align-items: center; }
.qtree .chap svg { margin: 0 8px 0 -18px; }
.qtree .picked { color: #0a8cf0; }
.qtree .gap { height: 462px; }
.qscroll { width: 17px; background: #d3d3d3; display: flex; flex-direction: column; justify-content: space-between; }
.qscroll button { height: 17px; background: #fff; border: 1px solid #aaa; display: flex; align-items: center; justify-content: center; }
.qright { flex: 1; min-width: 0; display: flex; flex-direction: column; }
.qgrid { flex: 1; min-height: 0; overflow: hidden; background: #fff; border: 1px solid #828790; border-right: 0; }
.quota th { height: 21px; line-height: 18px; }
.quota td { border-color: #d3d3d3; }
.quota .root td { padding-top: 1px; border-bottom: 2px solid #808080; border-right: 0; }
.quota .grp td { background-color: #e0f6ff; border-right: 0; }
.grid.quota td.tail { text-align: right; vertical-align: top; padding: 3px 5px 0 0; }
.auto { display: flex; flex: none; align-items: center; gap: 5px; height: 42px; padding: 4px 0 0 10px; }

/* help window */
.help { position: absolute; left: 530px; top: 172px; width: 869px; height: 473px; display: flex; flex-direction: column; background: #f0f0f0; border: 1px solid #1a7fd4; box-shadow: 0 3px 16px rgba(0, 0, 0, .4); }
.htitle { display: flex; flex: none; align-items: center; height: 30px; padding-left: 8px; background: #fff; }
.htitle h1 { flex: 1; margin: 0 0 0 4px; font: 12px/18px "Noto Sans", sans-serif; }
.htitle button { width: 46px; height: 29px; display: flex; align-items: center; justify-content: center; }
.htools { display: flex; flex: none; height: 45px; padding-top: 3px; border-bottom: 2px solid #808080; }
.htools button { width: 58px; margin-right: 1px; display: flex; flex-direction: column; align-items: center; line-height: 16px; }
.htools button:disabled { color: #a0a0a0; }
.hpanes { flex: 1; min-height: 0; display: flex; padding-bottom: 2px; }
.hleft { width: 176px; flex: none; display: flex; flex-direction: column; padding-top: 7px; }
.htabs { display: flex; flex: none; align-items: flex-end; }
.htabs button { width: 60px; height: 27px; border: solid #fff; border-width: 1px 2px 0 0; border-right-color: #707070; }
.htabs .on { width: 64px; height: 30px; border-left: 1px solid #fff; }
.hpanel { flex: 1; min-height: 0; padding: 5px 6px 5px 9px; border: solid #707070; border-width: 0 2px 2px 0; box-shadow: inset 1px 0 #fff; }
.hbox { height: 100%; display: flex; flex-direction: column; background: #f0f0f0; border: solid #707070; border-width: 2px 1px 1px 2px; border-right-color: #fff; border-bottom-color: #fff; }
.hview { flex: 1; min-height: 0; display: flex; background: #fff; overflow: hidden; }
.htree { flex: 1; min-width: 0; overflow: hidden; }
.htree li { display: flex; align-items: center; height: 20px; padding-left: 60px; white-space: nowrap; background: repeating-linear-gradient(#888 0 1px, transparent 1px 2px) 26px 0 / 1px 100% no-repeat, repeating-linear-gradient(#888 0 1px, transparent 1px 2px) 45px 0 / 1px 100% no-repeat, repeating-linear-gradient(90deg, #888 0 1px, transparent 1px 2px) 46px 10px / 11px 1px no-repeat; }
.htree li.book { padding-left: 22px; background: repeating-linear-gradient(#888 0 1px, transparent 1px 2px) 26px 0 / 1px 100% no-repeat; }
.htree li span { padding: 0 2px; margin-left: 2px; }
.htree li.book span { padding: 0; }
.htree li.on span { background: #0078d7; color: #fff; outline: 1px dotted #f90; outline-offset: -1px; }
.vbar { width: 18px; flex: none; display: flex; flex-direction: column; align-items: center; justify-content: space-between; background: #f0f0f0; padding: 6px 2px 5px 0; }
.vbar i { width: 15px; height: 150px; margin: 15px 0 auto; background: #cdcdcd; }
.hbar { flex: none; height: 17px; display: flex; align-items: center; padding: 0 22px 0 4px; }
.hbar i { width: 52px; height: 15px; margin: 0 auto 0 6px; background: #cdcdcd; }
.split { width: 8px; flex: none; border-left: 1px solid #f0f0f0; background: linear-gradient(90deg, transparent 3px, #fff 3px 4px, transparent 4px); }
.hright { flex: 1; min-width: 0; display: flex; background: #fff; border-left: 2px solid #696969; }
.hright article { flex: 1; min-width: 0; padding: 2px 0 0 10px; overflow: hidden; font-size: 16px; line-height: 18px; font-weight: 300; }
.hright p { margin: 0; text-indent: 2em; white-space: nowrap; }
.n { font: 13px/1px "Liberation Mono", monospace; }
.abar { width: 18px; flex: none; display: flex; flex-direction: column; align-items: center; background: #f0f0f0; padding: 17px 0; }
.abar i { width: 15px; height: 44px; margin: 113px 0 auto; background: #cdcdcd; }

.marks { position: absolute; left: 0; top: 0; pointer-events: none; }
```
